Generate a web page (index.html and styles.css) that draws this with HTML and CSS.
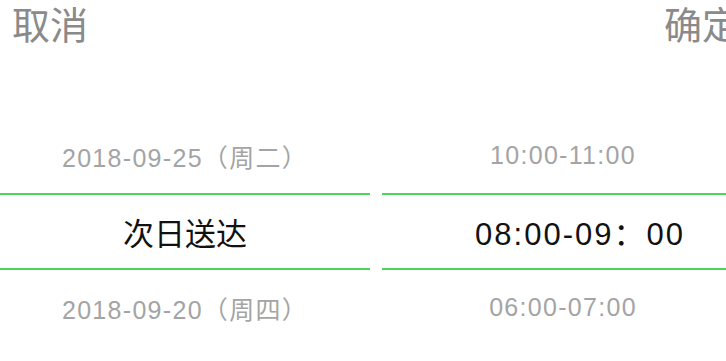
FILE: index.html
```html
<!DOCTYPE html>
<html lang="zh-CN">
<head>
<meta charset="utf-8">
<link rel="stylesheet" href="styles.css">
</head>
<body>
<div class="picker">
  <div class="toolbar">
    <span class="btn">取消</span>
    <span class="btn">确定</span>
  </div>
  <div class="columns">
    <div class="col">
      <div class="row dim">2018-09-25（周二）</div>
      <div class="row sel">次日送达</div>
      <div class="row dim">2018-09-20（周四）</div>
    </div>
    <div class="col right">
      <div class="row dim">10:00-11:00</div>
      <div class="row sel num">08:00-09：00</div>
      <div class="row dim">06:00-07:00</div>
    </div>
  </div>
</div>
</body>
</html>
```
FILE: styles.css
```css
html, body {
  margin: 0;
  padding: 0;
  overflow: hidden;
  background: #fff;
}
body {
  font-family: "Liberation Sans", "Noto Sans CJK SC", sans-serif;
}
.picker {
  width: 752px;
}
.toolbar {
  display: flex;
  justify-content: space-between;
  align-items: center;
  height: 46px;
  padding: 0 12px;
}
.btn {
  font-family: "Noto Sans CJK SC", sans-serif;
  font-size: 38px;
  color: #8a8a8a;
  line-height: 46px;
}
.columns {
  display: flex;
  gap: 12px;
  margin-top: 72px;
}
.col {
  flex: 1;
  display: flex;
  flex-direction: column;
}
.row {
  height: 75px;
  display: flex;
  align-items: center;
  justify-content: center;
  white-space: nowrap;
}
.right .row {
  padding-right: 8px;
}
.dim {
  font-size: 25px;
  letter-spacing: 1.3px;
  color: #a4a4a4;
}
.sel {
  font-size: 31px;
  color: #111;
  border-top: 2px solid #4cd45c;
  border-bottom: 2px solid #4cd45c;
  height: 73px;
}
.right .num {
  letter-spacing: 2px;
  padding-left: 34px;
}
```
